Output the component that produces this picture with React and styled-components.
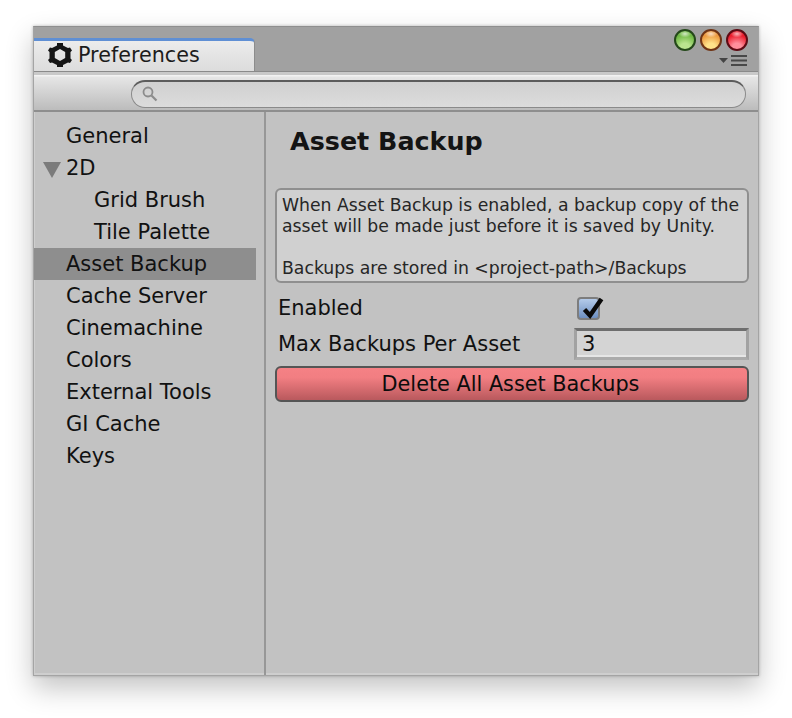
import styled, { createGlobalStyle } from "styled-components";

const GlobalStyle = createGlobalStyle`
  html, body {
    margin: 0;
    padding: 0;
    background: #fff;
  }
  body {
    font-family: "DejaVu Sans", "Liberation Sans", sans-serif;
  }
`;

const navItems = [
  { label: "General" },
  { label: "2D", expanded: true },
  { label: "Grid Brush", child: true },
  { label: "Tile Palette", child: true },
  { label: "Asset Backup", selected: true },
  { label: "Cache Server" },
  { label: "Cinemachine" },
  { label: "Colors" },
  { label: "External Tools" },
  { label: "GI Cache" },
  { label: "Keys" },
];

const GearIcon = () => (
  <svg width="24" height="24" viewBox="0 0 24 24">
    <path
      fillRule="evenodd"
      fill="#161616"
      d="M9 0h6v2.500l5 2.500 2-.5 2 3-1.500 1.500v6.500l1.500 1.500-2 3-2-.5-5 2.500v2.500h-6v-2.500l-5-2.500-2 .5-2-3 1.500-1.500v-6.500l-1.500-1.500 2-3 2 .5 5-2.500zM12 6l-5.200 3v6l5.200 3 5.200-3v-6z"
    />
  </svg>
);

const SearchIcon = () => (
  <svg width="18" height="18" viewBox="0 0 18 18" fill="none">
    <circle cx="7" cy="7" r="4.500" stroke="#8c8c8c" strokeWidth="1.800" />
    <path d="M10.500 10.500L15.500 15.500" stroke="#8c8c8c" strokeWidth="2.200" />
  </svg>
);

const MenuIcon = () => (
  <svg width="29" height="12" viewBox="0 0 29 12">
    <path d="M0 3h9L4.500 8z" fill="#444" />
    <path d="M12 1h16M12 5.500h16M12 10h16" stroke="#484848" strokeWidth="2" />
  </svg>
);

const CheckIcon = () => (
  <svg width="26" height="24" viewBox="0 0 26 24">
    <path
      d="M5.500 12.500L11 18.500L22.500 2"
      fill="none"
      stroke="#0a0a0a"
      strokeWidth="4.500"
    />
  </svg>
);

const App = () => {
  return (
    <Page>
      <GlobalStyle />
      <Window>
        <TabBar>
          <Tab>
            <GearIcon />
            <TabLabel>Preferences</TabLabel>
          </Tab>
          <WindowControls>
            <Lights>
              <Light $tone="green" />
              <Light $tone="orange" />
              <Light $tone="red" />
            </Lights>
            <MenuIcon />
          </WindowControls>
        </TabBar>
        <Toolbar>
          <SearchField>
            <SearchIcon />
          </SearchField>
        </Toolbar>
        <Body>
          <Sidebar>
            {navItems.map((item) => (
              <NavRow key={item.label} $selected={item.selected} $child={item.child}>
                {item.expanded && <Arrow />}
                {item.label}
              </NavRow>
            ))}
          </Sidebar>
          <Content>
            <Title>Asset Backup</Title>
            <HelpBox>
              When Asset Backup is enabled, a backup copy of the
              <br />
              asset will be made just before it is saved by Unity.
              <br />
              <br />
              Backups are stored in &lt;project-path&gt;/Backups
            </HelpBox>
            <CheckRow>
              <FieldLabel>Enabled</FieldLabel>
              <Checkbox>
                <CheckMark>
                  <CheckIcon />
                </CheckMark>
              </Checkbox>
            </CheckRow>
            <InputRow>
              <FieldLabel>Max Backups Per Asset</FieldLabel>
              <NumberField>3</NumberField>
            </InputRow>
            <DangerButton>Delete All Asset Backups</DangerButton>
          </Content>
        </Body>
      </Window>
    </Page>
  );
};

export default App;

const Page = styled.div`
  width: 792px;
  height: 718px;
  padding: 26px 33px 42px;
  box-sizing: border-box;
  overflow: hidden;
`;

const Window = styled.div`
  width: 726px;
  height: 650px;
  display: flex;
  flex-direction: column;
  box-sizing: border-box;
  border: 1px solid #a4a4a4;
  border-top-color: #8f8f8f;
  background: #c2c2c2;
  box-shadow: inset 1px 0 0 #cecece, inset 0 -2px 0 #cecece,
    0 12px 26px rgba(0, 0, 0, 0.24), 0 0 3px rgba(0, 0, 0, 0.25);
  color: #111;
`;

const TabBar = styled.div`
  height: 45px;
  flex: none;
  display: flex;
  justify-content: space-between;
  align-items: flex-start;
  box-sizing: border-box;
  background: #a1a1a1;
  border-bottom: 1px solid #8a8a8a;
`;

const Tab = styled.div`
  width: 221px;
  height: 33px;
  margin-top: 11px;
  display: flex;
  align-items: center;
  gap: 6px;
  padding: 0 0 3px 14px;
  box-sizing: border-box;
  background: linear-gradient(#ececec, #dcdcdc);
  border-top: 3px solid #5f8fd4;
  border-right: 1px solid #8c8c8c;
  border-top-right-radius: 5px;
`;

const TabLabel = styled.span`
  font-size: 20.700px;
  line-height: 26px;
  padding-top: 1px;
  color: #1c1c1c;
`;

const WindowControls = styled.div`
  display: flex;
  flex-direction: column;
  align-items: flex-end;
  gap: 4px;
  padding: 2px 10px 0 0;
`;

const lightColors = {
  green: ["#b9e48f", "#6fb843", "#24481a"],
  orange: ["#ffe28a", "#ec9a40", "#6f3415"],
  red: ["#ff8f9c", "#ea1c2c", "#5e0b14"],
};

const Lights = styled.div`
  display: flex;
  gap: 4px;
`;

const Light = styled.div`
  width: 22px;
  height: 22px;
  border-radius: 50%;
  box-sizing: border-box;
  border: 2px solid ${(p) => lightColors[p.$tone][2]};
  background:
    radial-gradient(ellipse 35% 20% at 50% 16%, rgba(255, 255, 255, 0.7), transparent),
    radial-gradient(circle at 50% 95%, ${(p) => lightColors[p.$tone][0]} 0 25%, ${(p) => lightColors[p.$tone][1]} 70%);
`;

const Toolbar = styled.div`
  height: 40px;
  flex: none;
  display: flex;
  align-items: center;
  padding: 5px 12px 0 97px;
  box-sizing: border-box;
  background: linear-gradient(#c9c9c9 0 3px, #f2f2f2 3px 4px, #e6e6e6 5px, #bcbcbc);
  border-bottom: 2px solid #8e8e8e;
`;

const SearchField = styled.div`
  flex: 1;
  height: 28px;
  display: flex;
  align-items: center;
  padding-left: 9px;
  box-sizing: border-box;
  border-radius: 14px;
  border: 1px solid #8a8a8a;
  border-top: 2px solid #5c5c5c;
  background: linear-gradient(#d0d0d0, #dcdcdc);
`;

const Body = styled.div`
  flex: 1;
  display: flex;
  min-height: 0;
`;

const Sidebar = styled.nav`
  width: 232px;
  flex: none;
  padding-top: 8px;
  box-sizing: border-box;
  border-right: 2px solid #979797;
`;

const NavRow = styled.div`
  width: 222px;
  height: 32px;
  display: flex;
  align-items: center;
  position: relative;
  padding-left: ${(p) => (p.$child ? 60 : 32)}px;
  box-sizing: border-box;
  font-size: 21px;
  background: ${(p) => (p.$selected ? "#8e8e8e" : "transparent")};
`;

const Arrow = styled.span`
  position: absolute;
  left: 9px;
  top: 10px;
  border-left: 9px solid transparent;
  border-right: 9px solid transparent;
  border-top: 16px solid #7b7b7b;
`;

const Content = styled.main`
  flex: 1;
  padding: 0 9px;
  min-width: 0;
`;

const Title = styled.h1`
  margin: 0;
  height: 76px;
  padding: 11px 0 0 15px;
  box-sizing: border-box;
  font-size: 25.400px;
  line-height: 36px;
  font-weight: 700;
  color: #141414;
`;

const HelpBox = styled.div`
  height: 95px;
  padding: 5px 5px;
  box-sizing: border-box;
  border: 2px solid #8f8f8f;
  border-radius: 6px;
  background: #d0d0d0;
  font-size: 17.250px;
  line-height: 21px;
  color: #262626;
  white-space: nowrap;
`;

const CheckRow = styled.div`
  height: 36px;
  margin-top: 7px;
  display: flex;
  align-items: center;
  padding-left: 3px;
`;

const InputRow = styled.div`
  height: 36px;
  display: flex;
  align-items: center;
  justify-content: space-between;
  padding-left: 3px;
`;

const FieldLabel = styled.span`
  font-size: 21px;
`;

const Checkbox = styled.div`
  width: 23px;
  height: 23px;
  position: relative;
  margin-left: 214px;
  box-sizing: border-box;
  border: 2px solid #7d7d7d;
  border-radius: 4px;
  background: linear-gradient(#b4cbea, #6d8fc0);
`;

const CheckMark = styled.span`
  position: absolute;
  left: 0;
  top: -2px;
  line-height: 0;
`;

const NumberField = styled.div`
  width: 175px;
  height: 32px;
  display: flex;
  align-items: center;
  padding-left: 5px;
  box-sizing: border-box;
  border: 3px solid #a2a2a2;
  border-top-color: #6e6e6e;
  border-bottom-color: #ababab;
  background: #d4d4d4;
  box-shadow: inset 0 -2px 0 #e6e6e6;
  font-size: 21px;
`;

const DangerButton = styled.button`
  display: block;
  width: 100%;
  height: 36px;
  margin-top: 4px;
  padding: 0 3px 1px 0;
  border: 2px solid #555;
  border-radius: 6px;
  background: linear-gradient(#f58185, #f27e82 30%, #b9595d);
  font-family: inherit;
  font-size: 20.800px;
  color: #0c0c0c;
`;
